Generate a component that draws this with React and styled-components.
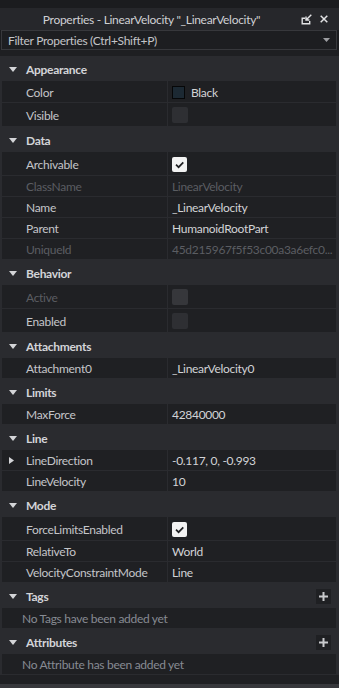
import React from 'react';
import styled, { createGlobalStyle } from 'styled-components';

const GlobalStyle = createGlobalStyle`
  html, body { margin: 0; padding: 0; background: #1b1c1f; }
  body {
    width: 339px; height: 688px; overflow: hidden;
    font-family: Lato, "Noto Sans", sans-serif;
    letter-spacing: -0.3px;
    -webkit-font-smoothing: antialiased;
  }
  * { box-sizing: border-box; }
`;

const Window = styled.div`
  display: flex; flex-direction: column;
  height: 688px; padding-top: 8px; background: #1b1c1f;
`;

const TitleBar = styled.div`
  height: 22px; flex: none;
  background: #26272b;
  display: flex; align-items: center;
  padding: 0 11px 0 10px;
`;

const Title = styled.div`
  flex: 1; text-align: center;
  font-size: 12px; color: #cfd0d4;
  white-space: nowrap;
`;

const TitleButtons = styled.div`
  display: flex; align-items: center; gap: 8px;
  margin-left: 8px;
  svg { display: block; }
`;

const FilterBox = styled.div`
  height: 20px; flex: none;
  margin: 0 2px 0 1px;
  border: 1px solid #37383c;
  background: #1d1e21;
  display: flex; align-items: center;
  padding: 0 6px 0 6px;
  font-size: 12px; color: #c3c4c8;
`;

const FilterText = styled.span`flex: 1;`;

const Spacer = styled.div`height: 6px; flex: none; background: #1e1f22;`;

const List = styled.div`
  flex: none;
  background: #2a2b2f;
  display: flex; flex-direction: column;
`;

const Header = styled.div`
  height: 25px;
  display: flex; align-items: center;
  padding: 1px 8px 0 9px;
  font-size: 12px; font-weight: 700; color: #d3d4d8;
`;

const HeaderArrow = styled.svg`
  width: 8px; height: 5px; margin-right: 9px; flex: none;
`;

const HeaderLabel = styled.span`flex: 1;`;

const PlusButton = styled.div`
  width: 15px; height: 15px;
  background: #1f2023;
  display: flex; align-items: center; justify-content: center;
  svg { display: block; }
`;

const Row = styled.div`
  display: grid;
  grid-template-columns: 166px 1fr;
  height: ${p => p.$h}px;
  margin: 0 3px 1px 2px;
  background: #1f2023;
  font-size: 12px;
`;

const NameCell = styled.div`
  display: flex; align-items: center;
  padding-left: ${p => (p.$expander ? 7 : 24)}px;
  padding-top: 1px;
  border-right: 1px solid #2a2b2f;
  color: ${p => (p.$disabled ? '#5b5d62' : '#c4c5c9')};
  white-space: nowrap; overflow: hidden;
`;

const Expander = styled.svg`
  width: 5px; height: 7px; margin-right: 12px; flex: none;
`;

const ValueCell = styled.div`
  display: flex; align-items: center;
  padding-left: 4px;
  padding-top: 1px;
  color: ${p => (p.$disabled ? '#5b5d62' : '#d2d3d6')};
  white-space: nowrap; overflow: hidden;
`;

const Swatch = styled.div`
  width: 13px; height: 13px;
  border: 1px solid #060708;
  background: ${p => p.$color};
  margin-right: 6px;
`;

const Check = styled.div`
  width: ${p => (p.$checked ? 15 : 16)}px;
  height: ${p => (p.$checked ? 15 : 16)}px;
  border-radius: 2px;
  background: ${p => (p.$checked ? '#f2f2f2' : p.$disabled ? '#36373b' : '#2e2f33')};
  display: flex; align-items: center; justify-content: center;
  svg { display: block; }
`;

const NoteRow = styled.div`
  height: 20px;
  margin: 0 3px 1px 2px;
  background: #1f2023;
  display: flex; align-items: center;
  padding: 1px 0 0 20px;
  font-size: 12px; color: #878b93;
`;

const Filler = styled.div`flex: 1; background: #1f2023;`;
const BottomEdge = styled.div`height: 4px; flex: none; background: #37383c;`;

const DownArrow = () => (
  <HeaderArrow viewBox="0 0 8 5"><path d="M0 0 H8 L4 5 Z" fill="#d4d5d8" /></HeaderArrow>
);

const Plus = () => (
  <PlusButton>
    <svg width="9" height="9" viewBox="0 0 9 9">
      <path d="M4.5 0 V9 M0 4.5 H9" stroke="#c9cacd" strokeWidth="2" />
    </svg>
  </PlusButton>
);

const CheckBox = ({ checked, disabled }) => (
  <Check $checked={checked} $disabled={disabled}>
    {checked && (
      <svg width="15" height="15" viewBox="0 0 15 15">
        <path d="M4 7.6 L6.6 10.2 L11.3 5.3" fill="none" stroke="#1f2023" strokeWidth="1.7" />
      </svg>
    )}
  </Check>
);

const sections = [
  {
    title: 'Appearance',
    rows: [
      { name: 'Color', h: 21, value: 'Black', swatch: '#1c2933' },
      { name: 'Visible', h: 23, check: false },
    ],
  },
  {
    title: 'Data',
    rows: [
      { name: 'Archivable', h: 23, check: true },
      { name: 'ClassName', h: 20, value: 'LinearVelocity', disabled: true },
      { name: 'Name', h: 20, value: '_LinearVelocity' },
      { name: 'Parent', h: 20, value: 'HumanoidRootPart' },
      { name: 'UniqueId', h: 20, value: '45d215967f5f53c00a3a6efc0...', disabled: true },
    ],
  },
  {
    title: 'Behavior',
    rows: [
      { name: 'Active', h: 23, check: false, disabled: true },
      { name: 'Enabled', h: 23, check: false },
    ],
  },
  {
    title: 'Attachments',
    rows: [{ name: 'Attachment0', h: 20, value: '_LinearVelocity0' }],
  },
  {
    title: 'Limits',
    rows: [{ name: 'MaxForce', h: 20, value: '42840000' }],
  },
  {
    title: 'Line',
    rows: [
      { name: 'LineDirection', h: 20, value: '-0.117, 0, -0.993', expander: true },
      { name: 'LineVelocity', h: 20, value: '10' },
    ],
  },
  {
    title: 'Mode',
    rows: [
      { name: 'ForceLimitsEnabled', h: 23, check: true },
      { name: 'RelativeTo', h: 20, value: 'World' },
      { name: 'VelocityConstraintMode', h: 20, value: 'Line' },
    ],
  },
  { title: 'Tags', plus: true, note: 'No Tags have been added yet' },
  { title: 'Attributes', plus: true, note: 'No Attribute has been added yet' },
];

export default function App() {
  return (
    <>
      <GlobalStyle />
      <Window>
        <TitleBar>
          <Title>Properties - LinearVelocity "_LinearVelocity"</Title>
          <TitleButtons>
            <svg width="11" height="11" viewBox="0 0 11 11">
              <path d="M4 4.3 H1.2 V9.8 H8.7 V7" fill="none" stroke="#e2e3e5" strokeWidth="1.4" />
              <path d="M10.3 0.7 L5 6 M5 2.6 V6 H8.4" fill="none" stroke="#e2e3e5" strokeWidth="1.4" />
            </svg>
            <svg width="8" height="8" viewBox="0 0 8 8">
              <path d="M0.7 0.7 L7.3 7.3 M7.3 0.7 L0.7 7.3" stroke="#e2e3e5" strokeWidth="1.5" />
            </svg>
          </TitleButtons>
        </TitleBar>
        <FilterBox>
          <FilterText>Filter Properties (Ctrl+Shift+P)</FilterText>
          <svg width="7" height="4" viewBox="0 0 7 4"><path d="M0 0 H7 L3.5 4 Z" fill="#9d9ea2" /></svg>
        </FilterBox>
        <Spacer />
        <List>
          {sections.map(sec => (
            <React.Fragment key={sec.title}>
              <Header>
                <DownArrow />
                <HeaderLabel>{sec.title}</HeaderLabel>
                {sec.plus && <Plus />}
              </Header>
              {sec.rows && sec.rows.map(r => (
                <Row key={r.name} $h={r.h}>
                  <NameCell $disabled={r.disabled} $expander={r.expander}>
                    {r.expander && (
                      <Expander viewBox="0 0 5 7"><path d="M0 0 L5 3.5 L0 7 Z" fill="#d4d5d8" /></Expander>
                    )}
                    {r.name}
                  </NameCell>
                  <ValueCell $disabled={r.disabled}>
                    {r.swatch && <Swatch $color={r.swatch} />}
                    {r.check !== undefined ? <CheckBox checked={r.check} disabled={r.disabled} /> : r.value}
                  </ValueCell>
                </Row>
              ))}
              {sec.note && <NoteRow>{sec.note}</NoteRow>}
            </React.Fragment>
          ))}
        </List>
        <Filler />
        <BottomEdge />
      </Window>
    </>
  );
}
